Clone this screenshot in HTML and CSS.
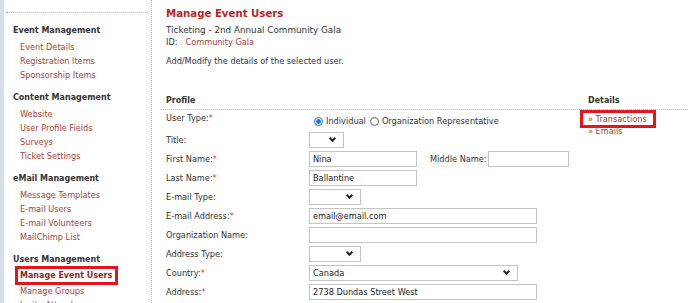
FILE: index.html
```html
<!DOCTYPE html>
<html lang="en">
<head>
    <meta charset="UTF-8">
    <title>Manage Event Users</title>
    <link rel="stylesheet" href="styles.css">
</head>
<body>

<div class="page">
    <div class="edge"></div>

    <nav class="sidebar">
        <div class="sidebar-head"></div>
        <div class="nav-group">
            <h4>Event Management</h4>
            <a href="#">Event Details</a>
            <a href="#">Registration Items</a>
            <a href="#">Sponsorship Items</a>
        </div>
        <div class="nav-group">
            <h4>Content Management</h4>
            <a href="#">Website</a>
            <a href="#">User Profile Fields</a>
            <a href="#">Surveys</a>
            <a href="#">Ticket Settings</a>
        </div>
        <div class="nav-group">
            <h4>eMail Management</h4>
            <a href="#">Message Templates</a>
            <a href="#">E-mail Users</a>
            <a href="#">E-mail Volunteers</a>
            <a href="#">MailChimp List</a>
        </div>
        <div class="nav-group">
            <h4>Users Management</h4>
            <a href="#" class="current boxed">Manage Event Users</a>
            <a href="#">Manage Groups</a>
            <a href="#">Invite Attendees</a>
        </div>
    </nav>

    <main class="main">
        <h1>Manage Event Users</h1>
        <p class="sub">Ticketing - 2nd Annual Community Gala</p>
        <p class="sub id-line">ID: <span class="dim">:</span> <a href="#">Community Gala</a></p>
        <p class="intro">Add/Modify the details of the selected user.</p>

        <div class="columns">
            <section class="profile">
                <h4 class="section-title">Profile</h4>

                <div class="row row-radio">
                    <label>User Type:<span class="req">*</span></label>
                    <div class="field radios">
                        <span class="radio checked"></span>Individual
                        <span class="radio"></span>Organization Representative
                    </div>
                </div>
                <div class="row">
                    <label>Title:</label>
                    <div class="field"><span class="select w-xs"></span></div>
                </div>
                <div class="row">
                    <label>First Name:<span class="req">*</span></label>
                    <div class="field">
                        <span class="input w-md">Nina</span>
                        <label class="inline">Middle Name:</label>
                        <span class="input w-sm"></span>
                    </div>
                </div>
                <div class="row">
                    <label>Last Name:<span class="req">*</span></label>
                    <div class="field"><span class="input w-md">Ballantine</span></div>
                </div>
                <div class="row">
                    <label>E-mail Type:</label>
                    <div class="field"><span class="select w-s"></span></div>
                </div>
                <div class="row">
                    <label>E-mail Address:<span class="req">*</span></label>
                    <div class="field"><span class="input w-lg">email@email.com</span></div>
                </div>
                <div class="row">
                    <label>Organization Name:</label>
                    <div class="field"><span class="input w-lg"></span></div>
                </div>
                <div class="row">
                    <label>Address Type:</label>
                    <div class="field"><span class="select w-s"></span></div>
                </div>
                <div class="row">
                    <label>Country:<span class="req">*</span></label>
                    <div class="field"><span class="select w-l">Canada</span></div>
                </div>
                <div class="row">
                    <label>Address:<span class="req">*</span></label>
                    <div class="field"><span class="input w-lg">2738 Dundas Street West</span></div>
                </div>
            </section>

            <aside class="details">
                <h4 class="section-title">Details</h4>
                <a href="#" class="boxed">&raquo; Transactions</a>
                <a href="#">&raquo; Emails</a>
            </aside>
        </div>
    </main>
</div>

</body>
</html>
```

FILE: styles.css
```css
body {
    margin: 0;
    font-family: "DejaVu Sans", Verdana, sans-serif;
    font-size: 8.2px;
    color: #333;
    background: #fff;
}
a {
    color: #a8433b;
    text-decoration: none;
}
.page {
    display: flex;
    height: 303px;
    overflow: hidden;
}
.edge {
    width: 4px;
    background: #d9dde5;
}

/* left menu */
.sidebar {
    width: 148px;
    display: flex;
    flex-direction: column;
    border-right: 1px dotted #b8b8b8;
    box-sizing: border-box;
}
.sidebar-head {
    flex: none;
    height: 12px;
    margin: 0 3px 2px 2px;
    border-bottom: 1px dotted #b8b8b8;
}
.nav-group {
    display: flex;
    flex-direction: column;
    margin-top: 10px;
    padding-left: 9px;
}
.nav-group h4 {
    margin: 0 0 3px;
    font-size: 8px;
    line-height: 12px;
    color: #333;
}
.nav-group a {
    padding-left: 7px;
    line-height: 14px;
}
.nav-group a.current {
    font-weight: bold;
    font-size: 8px;
    color: #8e2a22;
}
.boxed {
    outline: 3px solid #e4151f;
    align-self: flex-start;
}
.nav-group a.boxed {
    margin: 0 0 2px 5px;
    padding: 0 3px 0 2px;
    line-height: 13px;
}

/* main area */
.main {
    flex: 1;
    padding: 7px 0 0 14px;
}
.main h1 {
    margin: 0 0 3px;
    font-size: 10.2px;
    line-height: 14px;
    color: #b5261e;
}
.sub {
    margin: 0;
    line-height: 12px;
    font-size: 8.8px;
}
.id-line {
    font-size: 8.2px;
}
.dim {
    color: #ccc;
}
.intro {
    margin: 7px 0 0;
    line-height: 12px;
}
.columns {
    display: flex;
    margin-top: 28px;
}
.profile {
    flex: 1;
}
.section-title {
    margin: 0;
    font-size: 8px;
    line-height: 12px;
    padding-bottom: 2px;
    border-bottom: 1px dotted #b8b8b8;
}
.profile .section-title {
    margin-left: -6px;
    padding-left: 6px;
}
.details {
    width: 108px;
    display: flex;
    flex-direction: column;
}
.details .section-title {
    padding-left: 8px;
    margin-bottom: 3px;
}
.details a {
    margin-left: 3px;
    padding-left: 5px;
    line-height: 12px;
}
.details a.boxed {
    padding-right: 6px;
}

/* form rows */
.row {
    display: flex;
    align-items: center;
    height: 19px;
}
.row > label {
    width: 143px;
}
.row-radio {
    height: 20px;
    align-items: flex-start;
}
.row-radio > label {
    padding-top: 2px;
    line-height: 12px;
}
.req {
    color: #e03a2f;
}
.field {
    display: flex;
    align-items: center;
}
.radios {
    padding-left: 5px;
    margin-top: 5px;
    line-height: 12px;
}
.radio {
    width: 7px;
    height: 7px;
    border: 1px solid #666;
    border-radius: 50%;
    margin-right: 3px;
}
.radios .radio:last-of-type {
    margin-left: 4px;
}
.radio.checked {
    border-color: #1a73e8;
    background: radial-gradient(circle, #1a73e8 0 2px, #fff 2.6px);
}
.input,
.select {
    height: 14px;
    line-height: 14px;
    border: 1px solid #c4c4c4;
    padding: 0 3px;
    color: #222;
    background: #fff;
}
.select {
    position: relative;
}
.select::after {
    content: "";
    position: absolute;
    right: 8px;
    top: 3px;
    width: 3px;
    height: 3px;
    border-right: 2px solid #222;
    border-bottom: 2px solid #222;
    transform: rotate(45deg);
}
.w-xs { width: 27px; }
.w-s { width: 44px; }
.w-sm { width: 73px; }
.w-md { width: 100px; }
.w-l { width: 201px; }
.w-lg { width: 220px; }
.inline {
    margin: 0 1px 0 13px;
}
```
